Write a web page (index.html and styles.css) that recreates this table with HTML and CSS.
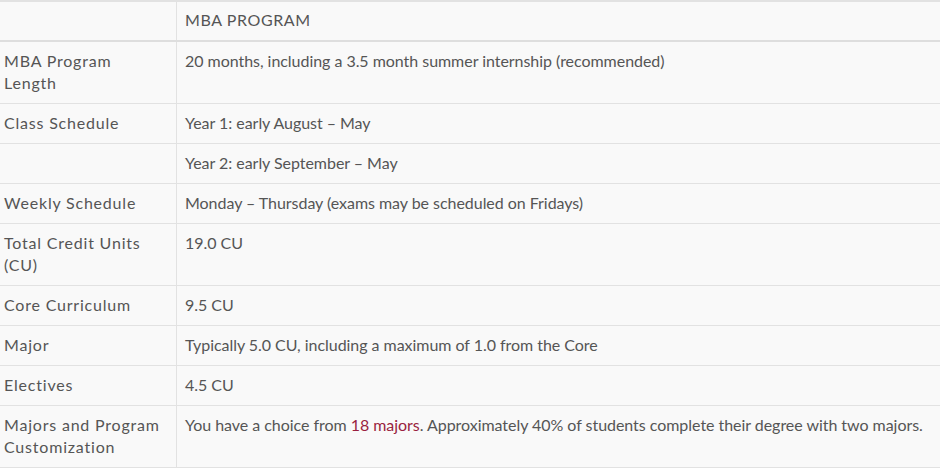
FILE: index.html
```html
<!DOCTYPE html>
<html lang="en">
<head>
<meta charset="utf-8">
<title>MBA Program</title>
<link rel="stylesheet" href="styles.css">
</head>
<body>
<table class="program">
  <thead>
    <tr>
      <th class="label"></th>
      <th class="head">MBA Program</th>
    </tr>
  </thead>
  <tbody>
    <tr><td class="label">MBA Program Length</td><td>20 months, including a 3.5 month summer internship (recommended)</td></tr>
    <tr><td class="label">Class Schedule</td><td>Year 1: early August – May</td></tr>
    <tr><td class="label"></td><td>Year 2: early September – May</td></tr>
    <tr><td class="label">Weekly Schedule</td><td>Monday – Thursday (exams may be scheduled on Fridays)</td></tr>
    <tr><td class="label">Total Credit Units (CU)</td><td>19.0 CU</td></tr>
    <tr><td class="label">Core Curriculum</td><td>9.5 CU</td></tr>
    <tr><td class="label">Major</td><td>Typically 5.0 CU, including a maximum of 1.0 from the Core</td></tr>
    <tr><td class="label">Electives</td><td>4.5 CU</td></tr>
    <tr><td class="label">Majors and Program Customization</td><td>You have a choice from <a href="#" class="link">18 majors</a>. Approximately 40% of students complete their degree with two majors.</td></tr>
  </tbody>
</table>
</body>
</html>
```
FILE: styles.css
```css
html, body {
  margin: 0;
  padding: 0;
  background: #f9f9f9;
}
body {
  font-family: Lato, "Open Sans", "Liberation Sans", sans-serif;
  font-size: 16px;
  color: #555555;
}
.program {
  width: 940px;
  border-collapse: collapse;
  border-top: 2px solid #e2e2e2;
  border-bottom: 2px solid #e2e2e2;
}
.program th,
.program td {
  text-align: left;
  vertical-align: top;
  font-weight: normal;
  line-height: 22px;
  padding: 8px 8px 9px 8px;
  border-bottom: 1px solid #e2e2e2;
  letter-spacing: -0.04px;
}
.program thead th {
  border-bottom: 2px solid #dedede;
  padding: 7px 8px 9px 8px;
}
.program .head {
  text-transform: uppercase;
  letter-spacing: 0.6px;
}
.program .label {
  width: 164px;
  padding-left: 4px;
  border-right: 1px solid #e2e2e2;
  letter-spacing: 0.8px;
}
.program tbody tr:last-child td {
  border-bottom: none;
}
.link {
  color: #9a1f40;
  text-decoration: none;
}
```
